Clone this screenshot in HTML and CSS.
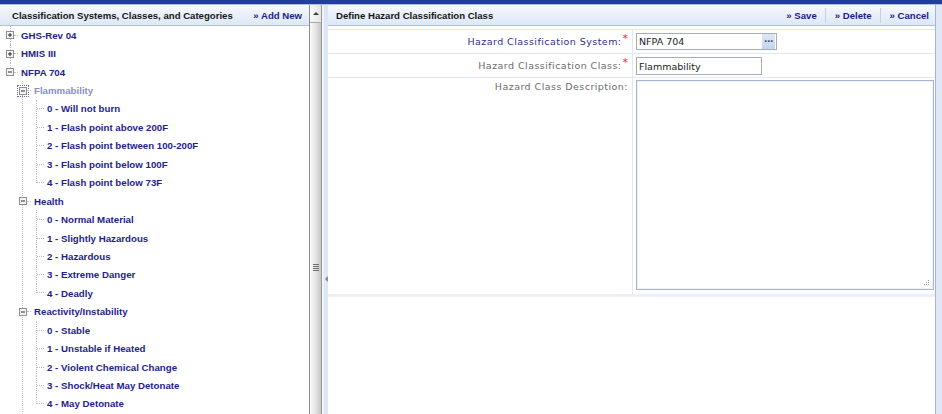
FILE: index.html
```html
<!DOCTYPE html>
<html>
<head>
<meta charset="utf-8">
<link rel="stylesheet" href="styles.css">
</head>
<body>
<div class="app">
  <div class="topbar"></div>
  <div class="main">
    <section class="tree-pane">
      <div class="phead">
        <span class="ptitle">Classification Systems, Classes, and Categories</span>
        <span class="btn">» Add New</span>
      </div>
      <div class="tree">
        <div class="row l1">
          <span class="node"><span class="vt"></span><svg class="box" width="8" height="8" viewBox="0 0 8 8"><rect x="0.5" y="0.5" width="7" height="7" fill="#f4f4f4" stroke="#8e8e8e"/><path d="M2 4H6M4 2V6" stroke="#2a2a2a" stroke-width="1"/></svg><span class="vb"></span></span>
          <span class="hl"></span><span class="txt">GHS-Rev 04</span>
        </div>
        <div class="row l1">
          <span class="node"><span class="vt"></span><svg class="box" width="8" height="8" viewBox="0 0 8 8"><rect x="0.5" y="0.5" width="7" height="7" fill="#f4f4f4" stroke="#8e8e8e"/><path d="M2 4H6M4 2V6" stroke="#2a2a2a" stroke-width="1"/></svg><span class="vb"></span></span>
          <span class="hl"></span><span class="txt">HMIS III</span>
        </div>
        <div class="row l1">
          <span class="node last"><span class="vt"></span><svg class="box" width="8" height="8" viewBox="0 0 8 8"><rect x="0.5" y="0.5" width="7" height="7" fill="#f4f4f4" stroke="#8e8e8e"/><path d="M2 4H6" stroke="#2a2a2a" stroke-width="1"/></svg><span class="vb"></span></span>
          <span class="hl"></span><span class="txt">NFPA 704</span>
        </div>
        <div class="grp2">
          <div class="row l2">
            <span class="node2"><svg class="box focus" width="8" height="8" viewBox="0 0 8 8"><rect x="0.5" y="0.5" width="7" height="7" fill="#f4f4f4" stroke="#8e8e8e"/><path d="M2 4H6" stroke="#2a2a2a" stroke-width="1"/></svg></span>
            <span class="hl"></span><span class="txt sel">Flammability</span>
          </div>
          <div class="row l3"><span class="conn"></span><span class="txt">0 - Will not burn</span></div>
          <div class="row l3"><span class="conn"></span><span class="txt">1 - Flash point above 200F</span></div>
          <div class="row l3"><span class="conn"></span><span class="txt">2 - Flash point between 100-200F</span></div>
          <div class="row l3"><span class="conn"></span><span class="txt">3 - Flash point below 100F</span></div>
          <div class="row l3"><span class="conn last"></span><span class="txt">4 - Flash point below 73F</span></div>
          <div class="row l2">
            <span class="node2"><svg class="box" width="8" height="8" viewBox="0 0 8 8"><rect x="0.5" y="0.5" width="7" height="7" fill="#f4f4f4" stroke="#8e8e8e"/><path d="M2 4H6" stroke="#2a2a2a" stroke-width="1"/></svg></span>
            <span class="hl"></span><span class="txt">Health</span>
          </div>
          <div class="row l3"><span class="conn"></span><span class="txt">0 - Normal Material</span></div>
          <div class="row l3"><span class="conn"></span><span class="txt">1 - Slightly Hazardous</span></div>
          <div class="row l3"><span class="conn"></span><span class="txt">2 - Hazardous</span></div>
          <div class="row l3"><span class="conn"></span><span class="txt">3 - Extreme Danger</span></div>
          <div class="row l3"><span class="conn last"></span><span class="txt">4 - Deadly</span></div>
          <div class="row l2">
            <span class="node2"><svg class="box" width="8" height="8" viewBox="0 0 8 8"><rect x="0.5" y="0.5" width="7" height="7" fill="#f4f4f4" stroke="#8e8e8e"/><path d="M2 4H6" stroke="#2a2a2a" stroke-width="1"/></svg></span>
            <span class="hl"></span><span class="txt">Reactivity/Instability</span>
          </div>
          <div class="row l3"><span class="conn"></span><span class="txt">0 - Stable</span></div>
          <div class="row l3"><span class="conn"></span><span class="txt">1 - Unstable if Heated</span></div>
          <div class="row l3"><span class="conn"></span><span class="txt">2 - Violent Chemical Change</span></div>
          <div class="row l3"><span class="conn"></span><span class="txt">3 - Shock/Heat May Detonate</span></div>
          <div class="row l3"><span class="conn last"></span><span class="txt">4 - May Detonate</span></div>
        </div>
      </div>
    </section>
    <div class="vscroll">
      <div class="vs-up"><span class="tri"></span></div>
      <div class="vs-thumb"><span class="grip"><i></i><i></i><i></i><i></i></span></div>
    </div>
    <div class="splitter"><span class="sp-l"></span><span class="sp-r"><span class="arrow"></span></span></div>
    <section class="right">
      <div class="phead rhead">
        <span class="ptitle">Define Hazard Classification Class</span>
        <span class="btns">
          <span class="btn">» Save</span><span class="sep"></span>
          <span class="btn">» Delete</span><span class="sep"></span>
          <span class="btn last">» Cancel</span>
        </span>
      </div>
      <div class="form">
        <div class="lbl active">Hazard Classification System:<span class="req">*</span></div>
        <div class="fld">
          <div class="combo"><span class="val">NFPA 704</span><span class="dots">...</span></div>
        </div>
        <div class="lbl">Hazard Classification Class:<span class="req">*</span></div>
        <div class="fld">
          <div class="inp"><span class="val">Flammability</span></div>
        </div>
        <div class="lbl top last">Hazard Class Description:</div>
        <div class="fld top last">
          <div class="ta">
            <svg width="6" height="6" viewBox="0 0 6 6" class="rz"><rect x="4" y="0" width="1" height="1" fill="#9a9a9a"/><rect x="2" y="2" width="1" height="1" fill="#9a9a9a"/><rect x="4" y="2" width="1" height="1" fill="#9a9a9a"/><rect x="0" y="4" width="1" height="1" fill="#9a9a9a"/><rect x="2" y="4" width="1" height="1" fill="#9a9a9a"/><rect x="4" y="4" width="1" height="1" fill="#9a9a9a"/></svg>
          </div>
        </div>
      </div>
    </section>
    <div class="rstrip"></div>
  </div>
</div>
</body>
</html>
```
FILE: styles.css
```css
* { box-sizing: border-box; margin: 0; padding: 0; }
html, body { width: 942px; height: 414px; overflow: hidden; background: #fff; }
body {
  font-family: "Liberation Sans", Arial, sans-serif;
  font-size: 9.6px;
  color: #141414;
}
.app { display: flex; flex-direction: column; height: 414px; }
.topbar {
  height: 5px; flex: none;
  background: #213f9a;
  border-bottom: 1px solid #a9bfe6;
}
.main { flex: 1; display: flex; min-height: 0; }

/* panel headers */
.phead {
  height: 21px; flex: none;
  display: flex; align-items: center; justify-content: space-between;
  background: linear-gradient(#f6f9fe, #dde7f6);
  border-bottom: 1px solid #abc2e6;
  font-weight: bold;
  padding: 0 7px 0 12px;
}
.ptitle { color: #161616; }
.btn { color: #1b1b8e; font-weight: bold; white-space: nowrap; }

/* tree pane */
.tree-pane { width: 309px; flex: none; display: flex; flex-direction: column; overflow: hidden; }
.tree { flex: 1; font-weight: bold; color: #1e1e8c; font-size: 9.7px; }
.row { height: 18.45px; display: flex; align-items: center; white-space: nowrap; }
.txt { margin-left: 3px; }
.txt.sel { color: #8c8cd2; }
.hl { width: 4px; height: 0; border-top: 1px dotted #bcbcbc; flex: none; }

.l1 { padding-left: 6px; }
.node {
  width: 8px; flex: none; align-self: stretch;
  display: flex; flex-direction: column; align-items: center;
}
.node .vt, .node .vb { flex: 1; width: 1px; border-left: 1px dotted #bcbcbc; }
.node.last .vb { border-left-color: transparent; }
.box { display: block; flex: none; }
.box.focus { outline: 1px dotted #6a6ab4; outline-offset: 1px; }

.grp2 {
  background: linear-gradient(to bottom, #bdbdbd 50%, transparent 50%) 22px 0 / 1px 2px repeat-y;
}
.l2 { padding-left: 19px; }
.node2 { width: 8px; flex: none; }
.l3 { padding-left: 36px; }
.conn {
  width: 8px; flex: none; align-self: stretch;
  border-left: 1px dotted #bcbcbc;
  background: linear-gradient(to right, #bcbcbc 50%, transparent 50%) 0 50% / 2px 1px repeat-x;
}
.conn.last {
  align-self: flex-start; height: 50%;
  background: none;
  border-bottom: 1px dotted #bcbcbc;
}

/* scrollbar */
.vscroll {
  width: 13px; flex: none;
  display: flex; flex-direction: column;
  border-left: 1px solid #8d8d8d;
  border-right: 1px solid #9a9a9a;
  background: #eeeeee;
}
.vs-up { height: 16px; flex: none; display: flex; align-items: center; justify-content: center; background: linear-gradient(to right, #fafafa, #e4e4e4); }
.tri { width: 0; height: 0; border-left: 3px solid transparent; border-right: 3px solid transparent; border-bottom: 3px solid #3c3c3c; }
.vs-thumb {
  flex: 1; margin-top: 1px;
  border-top: 1px solid #a8a8a8;
  background: linear-gradient(to right, #fbfbfb, #e2e2e2 55%, #c4c4c4);
  display: flex; justify-content: center;
  padding-top: 241px;
}
.grip { display: flex; flex-direction: column; gap: 1px; width: 6px; height: 8px; }
.grip i { display: block; height: 1px; background: #6f6f6f; }

/* splitter */
.splitter { width: 6px; flex: none; display: flex; }
.sp-l { width: 2px; background: #f3f3f3; }
.sp-r { flex: 1; background: #dbe7f8; padding-top: 271px; display: flex; justify-content: center; }
.arrow { width: 0; height: 0; border-top: 3px solid transparent; border-bottom: 3px solid transparent; border-right: 3px solid #8a8a8a; }

/* right panel */
.right { flex: 1; display: flex; flex-direction: column; min-width: 0; }
.rhead { padding: 0 6px 0 8px; }
.btns { display: flex; align-items: center; }
.btns .btn { padding: 0 8px 0 9px; }
.btns .btn:first-child { padding-left: 0; }
.btns .btn.last { padding-right: 0; }
.sep { width: 1px; height: 15px; background: #c3d2ec; }

.form {
  margin-top: 3px;
  display: grid;
  grid-template-columns: 304px 1fr;
  grid-template-rows: 24px 24px 216px;
  border-top: 1px solid #e4e7ed;
  border-bottom: 3px solid #eceff4;
  font-family: "DejaVu Sans", Verdana, sans-serif;
  font-size: 9.5px;
}
.lbl {
  display: flex; align-items: center; justify-content: flex-end;
  padding-right: 4px;
  border-bottom: 1px solid #e4e7ed;
  letter-spacing: 0.45px;
  color: #6c6c6c;
  white-space: nowrap;
}
.lbl.active { color: #2f2f8c; }
.req { color: #e23232; font-size: 11px; align-self: flex-start; margin-top: 4px; line-height: 10px; letter-spacing: 0; margin-left: 1px; }
.fld {
  border-left: 1px solid #e4e7ed;
  border-bottom: 1px solid #e4e7ed;
  padding: 3px 0 0 3px;
}
.lbl.top { align-items: flex-start; padding-top: 3px; line-height: 12px; }
.lbl.last, .fld.last { border-bottom: none; }
.fld.top { padding-top: 2px; }

.combo, .inp {
  height: 17px;
  border: 1px solid #a3adbb;
  background: #fff;
  display: flex; align-items: center;
  color: #222;
}
.combo { width: 141px; }
.inp { width: 126px; height: 18px; }
.val { padding-left: 2px; flex: 1; white-space: nowrap; }
.dots {
  width: 13px; height: 15px; margin-right: 1px;
  background: linear-gradient(#dce6f6, #c6d5ef);
  color: #3a4660; font-size: 9px; font-weight: bold; text-align: center; line-height: 11px;
  letter-spacing: -0.5px;
}
.ta {
  width: 298px; height: 210px;
  border: 1px solid #a7b6cf;
  box-shadow: inset 0 0 0 1px #eef2f8;
  display: flex; justify-content: flex-end; align-items: flex-end;
  padding: 0 3px 3px 0;
}
.rz { display: block; }

.rstrip {
  width: 7px; flex: none;
  border-left: 1px solid #a2b6d8;
  background: #dfe8f6;
}
```
